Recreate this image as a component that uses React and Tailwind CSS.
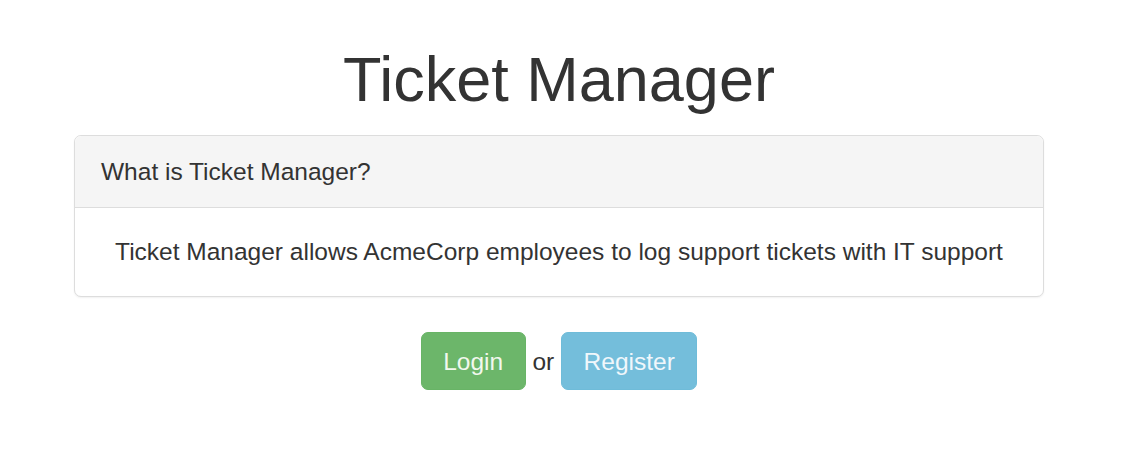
export default function App() {
  return (
    <div
      className="w-[1118px] text-[#333] text-[24.5px] leading-[35px]"
      style={{ fontFamily: '"Liberation Sans", Arial, sans-serif' }}
    >
      <div className="mx-auto w-[970px]">
        <h1 className="pt-[45px] mb-[21px] text-center text-[63px] leading-[1.1] font-normal">
          Ticket Manager
        </h1>

        <div className="mb-[35px] rounded-[7px] border border-[#ddd] bg-white shadow-[0_1px_2px_rgba(0,0,0,0.06)]">
          <div className="rounded-t-[7px] border-b border-[#ddd] bg-[#f5f5f5] px-[26px] py-[18px]">
            What is Ticket Manager?
          </div>
          <div className="px-[26px] pt-[26px] pb-[27px] text-center">
            Ticket Manager allows AcmeCorp employees to log support tickets with IT support
          </div>
        </div>

        <div className="text-center">
          <a
            href="#"
            className="inline-block rounded-[7px] border border-[#68b466] bg-[#6cb66a] px-[21.5px] py-[10.5px] text-[#f2f8ee]"
          >
            Login
          </a>{" "}
          or{" "}
          <a
            href="#"
            className="inline-block rounded-[7px] border border-[#6fbcd9] bg-[#74bedb] px-[21.5px] py-[10.5px] text-[#f0f7fb]"
          >
            Register
          </a>
        </div>
      </div>
    </div>
  );
}
